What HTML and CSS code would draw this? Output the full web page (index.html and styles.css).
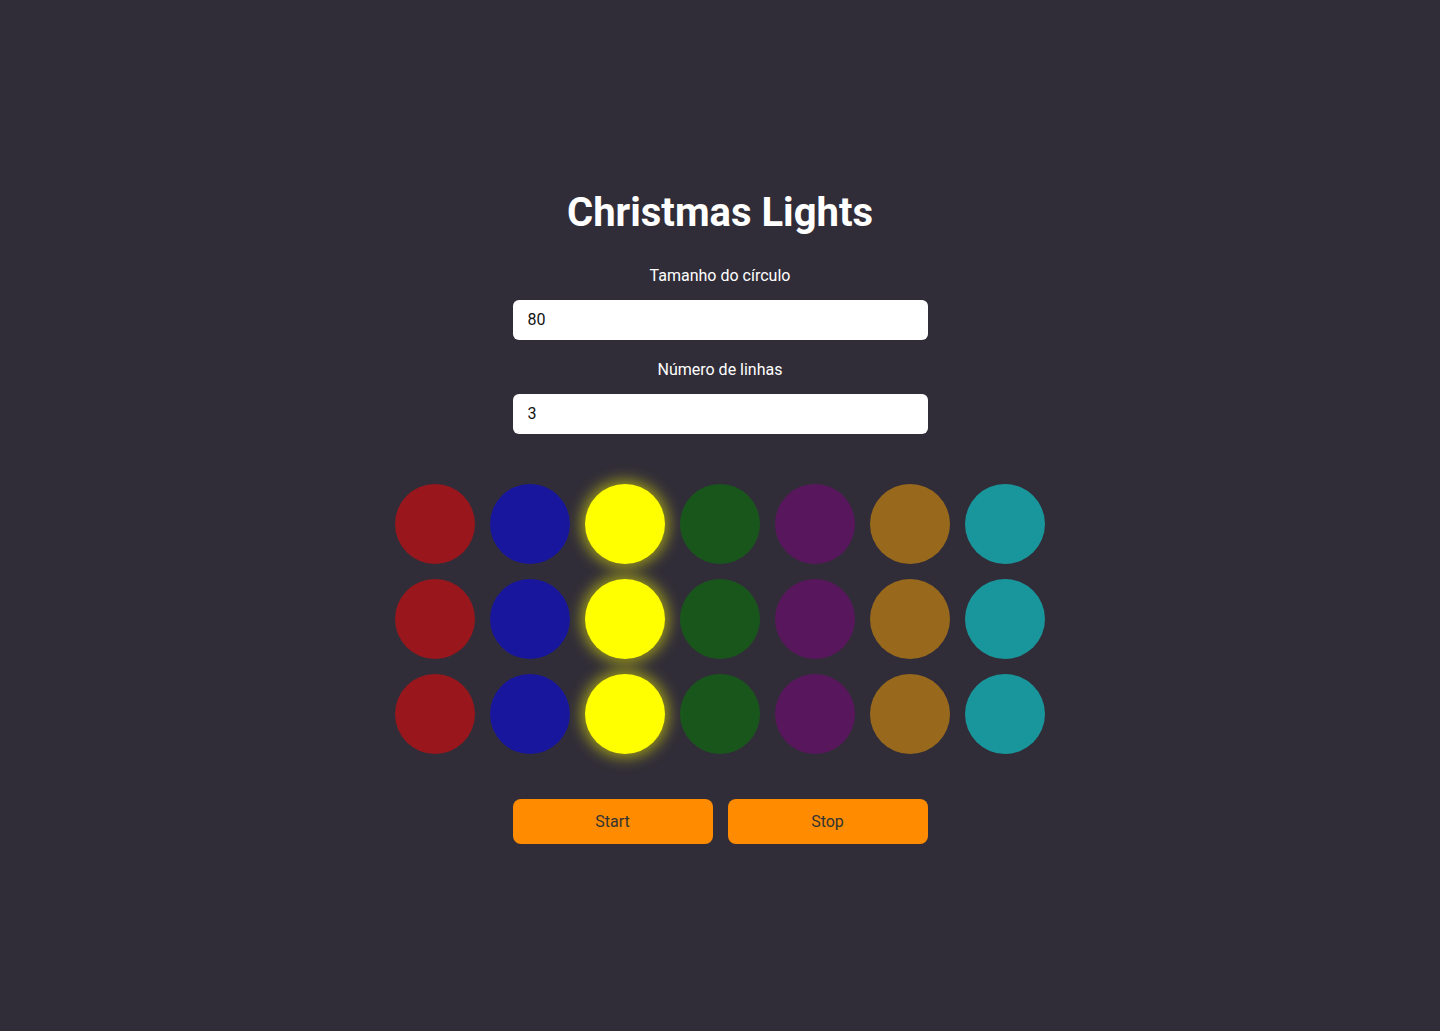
FILE: index.html
```html
<!DOCTYPE html>
<html lang="pt-BR">
<head>
<meta charset="utf-8">
<title>Christmas Lights</title>
<link rel="stylesheet" href="styles.css">
</head>
<body>
<main class="app">
  <h1 class="title">Christmas Lights</h1>
  <label class="field-label" for="size">Tamanho do círculo</label>
  <input class="field-input" id="size" type="text" value="80">
  <label class="field-label" for="rows">Número de linhas</label>
  <input class="field-input" id="rows" type="text" value="3">
  <div class="lights">
    <div class="row">
      <span class="light red"></span><span class="light blue"></span><span class="light yellow on"></span><span class="light green"></span><span class="light purple"></span><span class="light orange"></span><span class="light cyan"></span>
    </div>
    <div class="row">
      <span class="light red"></span><span class="light blue"></span><span class="light yellow on"></span><span class="light green"></span><span class="light purple"></span><span class="light orange"></span><span class="light cyan"></span>
    </div>
    <div class="row">
      <span class="light red"></span><span class="light blue"></span><span class="light yellow on"></span><span class="light green"></span><span class="light purple"></span><span class="light orange"></span><span class="light cyan"></span>
    </div>
  </div>
  <div class="controls">
    <button class="btn" type="button">Start</button>
    <button class="btn" type="button">Stop</button>
  </div>
</main>
</body>
</html>
```

FILE: styles.css
```css
html, body {
  margin: 0;
  padding: 0;
  background: #312d38;
  font-family: Roboto, "Liberation Sans", sans-serif;
  color: #ffffff;
}

.app {
  display: flex;
  flex-direction: column;
  align-items: center;
  padding-top: 189px;
}

.title {
  margin: 0 0 30px;
  font-size: 40px;
  font-weight: 700;
  line-height: normal;
}

.field-label {
  font-size: 16px;
  line-height: normal;
  margin: 0 0 15px;
}

.field-input {
  box-sizing: border-box;
  width: 415px;
  height: 40px;
  margin: 0 0 20px;
  padding: 0 15px 2px;
  border: none;
  border-radius: 6px;
  background: #ffffff;
  color: #111111;
  font-family: Roboto, "Liberation Sans", sans-serif;
  font-size: 16px;
  outline: none;
}

.lights {
  display: flex;
  flex-direction: column;
  gap: 15px;
  margin-top: 30px;
}

.row {
  display: flex;
  gap: 15px;
}

.light {
  display: block;
  width: 80px;
  height: 80px;
  border-radius: 50%;
  opacity: 0.5;
}

.light.on {
  opacity: 1;
  box-shadow: 0 0 14px 4px rgba(255, 255, 0, 0.5);
}

.red { background: #ff0000; }
.blue { background: #0000ff; }
.yellow { background: #ffff00; }
.green { background: #008000; }
.purple { background: #800080; }
.orange { background: #ffa500; }
.cyan { background: #00ffff; }

.controls {
  display: flex;
  gap: 15px;
  margin-top: 45px;
}

.btn {
  width: 200px;
  height: 45px;
  border: none;
  border-radius: 8px;
  background: #ff8c00;
  color: #333333;
  font-family: Roboto, "Liberation Sans", sans-serif;
  font-size: 16px;
  cursor: pointer;
}
```
